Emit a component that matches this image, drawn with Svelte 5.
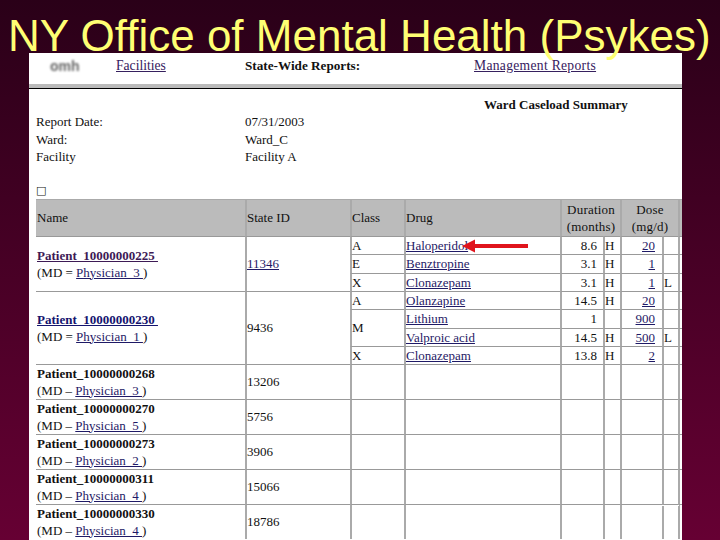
<script lang="ts">
  type Drug = { cls?: string; span?: number; name: string; dur: string; durFlag: string; dose: string; doseFlag: string };
  type Patient = {
    name: string;
    md: string;
    sep: string;
    stateId: string;
    idLink?: boolean;
    link?: 'visited' | 'fresh';
    drugs: Drug[];
  };

  const meta = [
    ['Report Date:', '07/31/2003'],
    ['Ward:', 'Ward_C'],
    ['Facility', 'Facility A']
  ];

  const blank: Drug = { name: '', dur: '', durFlag: '', dose: '', doseFlag: '' };

  const patients: Patient[] = [
    {
      name: 'Patient_10000000225', md: 'Physician_3', sep: '=', stateId: '11346', idLink: true, link: 'visited',
      drugs: [
        { cls: 'A', name: 'Haloperidol', dur: '8.6', durFlag: 'H', dose: '20', doseFlag: '' },
        { cls: 'E', name: 'Benztropine', dur: '3.1', durFlag: 'H', dose: '1', doseFlag: '' },
        { cls: 'X', name: 'Clonazepam', dur: '3.1', durFlag: 'H', dose: '1', doseFlag: 'L' }
      ]
    },
    {
      name: 'Patient_10000000230', md: 'Physician_1', sep: '=', stateId: '9436', link: 'fresh',
      drugs: [
        { cls: 'A', name: 'Olanzapine', dur: '14.5', durFlag: 'H', dose: '20', doseFlag: '' },
        { cls: 'M', span: 2, name: 'Lithium', dur: '1', durFlag: '', dose: '900', doseFlag: '' },
        { name: 'Valproic acid', dur: '14.5', durFlag: 'H', dose: '500', doseFlag: 'L' },
        { cls: 'X', name: 'Clonazepam', dur: '13.8', durFlag: 'H', dose: '2', doseFlag: '' }
      ]
    },
    { name: 'Patient_10000000268', md: 'Physician_3', sep: '–', stateId: '13206', drugs: [blank] },
    { name: 'Patient_10000000270', md: 'Physician_5', sep: '–', stateId: '5756', drugs: [blank] },
    { name: 'Patient_10000000273', md: 'Physician_2', sep: '–', stateId: '3906', drugs: [blank] },
    { name: 'Patient_10000000311', md: 'Physician_4', sep: '–', stateId: '15066', drugs: [blank] },
    { name: 'Patient_10000000330', md: 'Physician_4', sep: '–', stateId: '18786', drugs: [blank] }
  ];
</script>

<div class="slide">
  <h1>NY Office of Mental Health (Psykes)</h1>

  <div class="panel">
    <nav class="topnav">
      <span class="logo">omh</span>
      <a href="#facilities">Facilities</a>
      <b>State-Wide Reports:</b>
      <a class="mgmt" href="#management">Management Reports</a>
    </nav>
    <div class="rule"></div>

    <div class="summary-title">Ward Caseload Summary</div>

    <div class="meta">
      {#each meta as [label, value]}
        <span>{label}</span>
        <span>{value}</span>
      {/each}
    </div>

    <div class="box">□</div>

    <table>
      <colgroup>
        <col style="width: 209px" />
        <col style="width: 105px" />
        <col style="width: 54px" />
        <col style="width: 156px" />
        <col style="width: 43px" />
        <col style="width: 17px" />
        <col style="width: 42px" />
        <col style="width: 16px" />
        <col style="width: 4px" />
      </colgroup>
      <thead>
        <tr>
          <th>Name</th>
          <th>State ID</th>
          <th>Class</th>
          <th>Drug</th>
          <th class="center" colspan="2">Duration<br />(months)</th>
          <th class="center" colspan="2">Dose<br />(mg/d)</th>
          <th></th>
        </tr>
      </thead>
      <tbody>
        {#each patients as p}
          {#each p.drugs as d, i}
            <tr class:single={p.drugs.length === 1} class:second={i === 1}>
              {#if i === 0}
                <td rowspan={p.drugs.length} class="name">
                  {#if p.link}
                    <a class="patient {p.link}" href="#patient">{p.name}&nbsp;</a>
                  {:else}
                    <b>{p.name}</b>
                  {/if}
                  <br />
                  (MD {p.sep} <a href="#physician">{p.md}&nbsp;</a>)
                </td>
                <td rowspan={p.drugs.length}>
                  {#if p.idLink}<a href="#state">{p.stateId}</a>{:else}{p.stateId}{/if}
                </td>
              {/if}
              {#if d.cls}
                <td rowspan={d.span ?? 1}>{d.cls}</td>
              {:else if p.drugs.length === 1}
                <td></td>
              {/if}
              <td>{#if d.name}<a href="#drug">{d.name}</a>{/if}</td>
              <td class="num dur">{d.dur}</td>
              <td>{d.durFlag}</td>
              <td class="num">{#if d.dose}<a href="#dose">{d.dose}</a>{/if}</td>
              <td>{d.doseFlag}</td>
              <td></td>
            </tr>
          {/each}
        {/each}
      </tbody>
    </table>
  </div>

  <svg class="arrow" width="68" height="16" viewBox="0 0 68 16" aria-hidden="true">
    <path d="M0 8 L13 1.5 V6 H66 V10 H13 V14.5 Z" fill="#e0141c" />
  </svg>
  <div class="speck"></div>
</div>

<style>
  :global(body) {
    margin: 0;
  }

  .slide {
    position: relative;
    width: 720px;
    height: 540px;
    overflow: hidden;
    background: linear-gradient(#2a0018, #660033);
    font-family: 'Liberation Serif', serif;
    color: #111;
  }

  h1 {
    position: relative;
    z-index: 1;
    margin: 0;
    height: 53px;
    padding-left: 8px;
    font: 400 44px/71px 'Liberation Sans', sans-serif;
    color: #ffff73;
    white-space: nowrap;
  }

  .panel {
    width: 653px;
    height: 487px;
    margin-left: 29px;
    overflow: hidden;
    background: #fff;
    font-size: 13px;
  }

  a {
    color: #1f1a66;
  }

  .topnav {
    display: grid;
    grid-template-columns: 66px 129px 229px auto;
    height: 31px;
    align-items: center;
    box-sizing: border-box;
    padding: 0 0 6px 21px;
    font-size: 13.6px;
    white-space: nowrap;
  }

  .topnav a {
    color: #36205e;
  }

  .topnav b {
    font-size: 13.2px;
  }

  .topnav .mgmt {
    letter-spacing: 0.3px;
  }

  .logo {
    font: 700 14px 'Liberation Sans', sans-serif;
    color: #666;
    filter: blur(0.8px);
  }

  .rule {
    height: 4px;
    background: #bbb;
    border-bottom: 1px solid #000;
  }

  .summary-title {
    padding: 8px 0 0 455px;
    height: 16px;
    line-height: 16px;
    font-weight: 700;
    white-space: nowrap;
  }

  .meta {
    display: grid;
    grid-template-columns: 209px auto;
    grid-auto-rows: 17.5px;
    padding: 0 0 0 7px;
    line-height: 17.5px;
  }

  .box {
    height: 17px;
    margin-top: 16px;
    padding-left: 7px;
    line-height: 17px;
    font-family: 'DejaVu Sans', sans-serif;
    font-size: 11px;
  }

  table {
    table-layout: fixed;
    width: 646px;
    margin: 0 0 0 7px;
    border-collapse: separate;
    border-spacing: 0;
    line-height: 17px;
    font-size: 13px;
  }

  th,
  td {
    box-sizing: border-box;
    padding: 0;
    border-left: 2px solid #aaa;
    border-top: 1px solid #999;
    font-weight: 400;
    text-align: left;
    white-space: nowrap;
    overflow: hidden;
  }

  th:first-child,
  td.name {
    border-left: 0;
    padding-left: 1px;
  }

  th {
    height: 37px;
    background: #bbb;
    border-top-color: #aaa;
  }

  th.center {
    text-align: center;
    letter-spacing: 0.2px;
  }

  tbody tr {
    height: 18px;
  }

  tbody tr.second {
    height: 19px;
  }

  tbody tr.single {
    height: 35px;
  }

  td.num {
    padding-right: 7px;
    text-align: right;
  }

  td.dur {
    padding-right: 6px;
  }

  .patient {
    font-weight: 700;
  }

  .patient.visited {
    color: #3d1a55;
  }

  .patient.fresh {
    color: #14146e;
  }

  .arrow {
    position: absolute;
    left: 462px;
    top: 238px;
  }

  .speck {
    position: absolute;
    left: 662px;
    top: 505px;
    width: 17px;
    border-top: 1px dashed #fff;
  }
</style>
